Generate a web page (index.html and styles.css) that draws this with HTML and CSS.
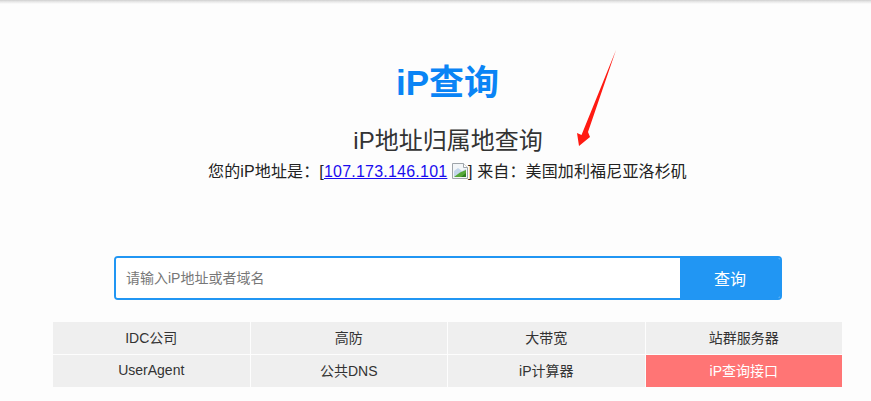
FILE: index.html
```html
<!DOCTYPE html>
<html lang="zh-CN">
<head>
<meta charset="utf-8">
<title>iP查询</title>
<link rel="stylesheet" href="styles.css">
</head>
<body>
<div class="topline"></div>
<svg class="arrow" width="60" height="110" viewBox="0 0 60 110" aria-hidden="true">
  <path d="M56 10 L28 92 L30 97 L19 106 L17 93 L21.500 95 Z" fill="#ff1a12"/>
</svg>
<main class="page">
  <h1 class="logo">iP查询</h1>
  <h2 class="subtitle">iP地址归属地查询</h2>
  <p class="ipline">您的iP地址是：[<a href="#" class="iplink">107.173.146.101</a>
    <svg class="broken" width="16" height="16" viewBox="0 0 16 16" aria-hidden="true">
      <path d="M0.500 0.500H11.500L15.500 4.500V15.500H0.500Z" fill="#f3f6f8" stroke="#9fa5aa"/>
      <path d="M11.500 0.500V4.500H15.500" fill="#fff" stroke="#9fa5aa"/>
      <path d="M2 8L6 5L10 8L14 6V8L5 14H2Z" fill="#c3d6ea"/>
      <path d="M2 14L8 9.500L14 7V14Z" fill="#55a838"/>
      <path d="M9 14L14 10V14Z" fill="#2f7d20"/>
    </svg>] 来自：美国加利福尼亚洛杉矶</p>
  <form class="search">
    <input class="search-input" type="text" placeholder="请输入iP地址或者域名">
    <button class="search-btn" type="button">查询</button>
  </form>
  <nav class="links">
    <a class="cell" href="#">IDC公司</a>
    <a class="cell" href="#">高防</a>
    <a class="cell" href="#">大带宽</a>
    <a class="cell" href="#">站群服务器</a>
    <a class="cell" href="#">UserAgent</a>
    <a class="cell" href="#">公共DNS</a>
    <a class="cell" href="#">iP计算器</a>
    <a class="cell cell-hot" href="#">iP查询接口</a>
  </nav>
</main>
</body>
</html>
```
FILE: styles.css
```css
* { box-sizing: border-box; }
html, body { margin: 0; height: 100%; overflow: hidden; }
body {
  background: #fdfdfd;
  color: #333;
  font-family: "Liberation Sans", "Noto Sans CJK SC", sans-serif;
  position: relative;
}
.topline {
  height: 4px;
  background: linear-gradient(#cfcfcf, #e6e6e6 40%, #fdfdfd);
}
.arrow { position: absolute; left: 560px; top: 40px; }
.page {
  display: flex;
  flex-direction: column;
  padding: 0 29px 0 53px;
}
.logo {
  margin: 54px 0 0;
  height: 50px;
  line-height: 50px;
  font-size: 35px;
  font-weight: 700;
  color: #0a84f5;
  text-align: center;
}
.subtitle {
  margin: 16px 0 0;
  padding-left: 1px;
  height: 34px;
  line-height: 34px;
  font-size: 24px;
  font-weight: 400;
  color: #333;
  text-align: center;
}
.ipline {
  margin: 2px 0 0;
  height: 24px;
  line-height: 24px;
  font-size: 16px;
  letter-spacing: 0.14px;
  color: #222;
  text-align: center;
}
.iplink { color: #1a0dee; letter-spacing: 0.22px; }
.broken { vertical-align: -2px; }
.search {
  display: flex;
  height: 44px;
  margin: 72px 60px 0 61px;
  border-radius: 4px;
  overflow: hidden;
  border: 2px solid #2196f3;
}
.search-input {
  flex: 1;
  min-width: 0;
  border: 0;
  outline: 0;
  padding: 0 10px;
  font: 14px "Liberation Sans", "Noto Sans CJK SC", sans-serif;
  background: #fff;
}
.search-input::placeholder { color: #777; opacity: 1; }
.search-btn {
  width: 100px;
  border: 0;
  background: #2196f3;
  color: #fff;
  font: 16px "Liberation Sans", "Noto Sans CJK SC", sans-serif;
}
.links {
  display: grid;
  grid-template-columns: repeat(4, 1fr);
  grid-auto-rows: 32px;
  gap: 1px;
  margin-top: 22px;
}
.cell {
  display: flex;
  align-items: center;
  justify-content: center;
  padding-bottom: 2px;
  background: #efefef;
  color: #333;
  font-size: 14px;
  text-decoration: none;
}
.cell-hot { background: #ff7575; color: #fff; }
```
